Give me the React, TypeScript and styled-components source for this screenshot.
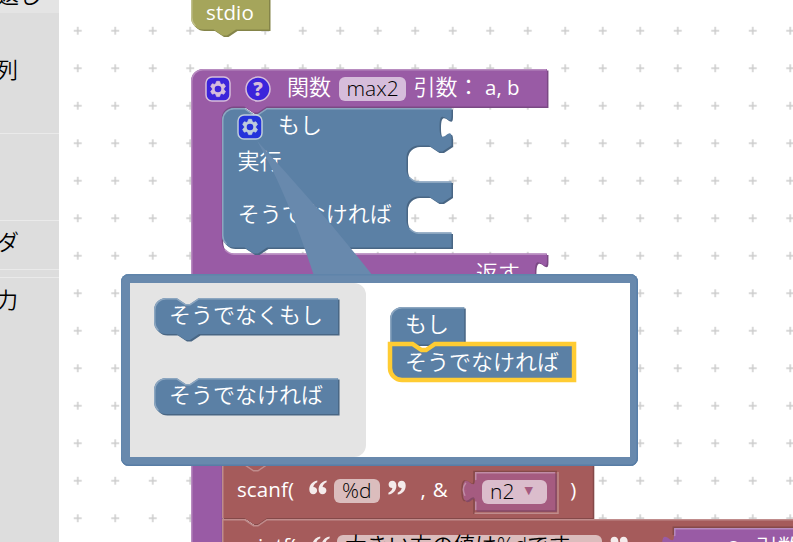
import React from 'react';
import styled, { createGlobalStyle } from 'styled-components';

const GlobalStyle = createGlobalStyle`
  * { box-sizing: border-box; }
  html, body, #root { margin: 0; height: 100%; }
  body { overflow: hidden; background: #fff; font: 350 22px "Noto Sans CJK JP", sans-serif; }
`;

const SIDEBAR = 59;
const SCALE = 1.5;

const Page = styled.div`
  display: flex;
  width: 793px;
  height: 542px;
  overflow: hidden;
`;

const Toolbox = styled.nav`
  flex: none;
  width: ${SIDEBAR}px;
  height: 542px;
  overflow: hidden;
  background: #ddd;
  display: flex;
  flex-direction: column;
`;

const Category = styled.div<{ $height: number; $active?: boolean; $line?: boolean; $end?: number; $bottom?: number }>`
  flex: none;
  height: ${p => p.$height}px;
  padding-right: ${p => SIDEBAR - (p.$end ?? 18)}px;
  padding-bottom: ${p => p.$bottom ?? 0}px;
  display: flex;
  align-items: flex-end;
  justify-content: flex-end;
  white-space: nowrap;
  line-height: 24px;
  color: #000;
  background: ${p => (p.$active ? '#e4e4e4' : 'transparent')};
  border-bottom: ${p => (p.$line ? '1px solid #eaeaea' : '0')};
`;

const Workspace = styled.main`
  position: relative;
  flex: 1;
  height: 542px;
  overflow: hidden;
  background: #fff;
`;

const Drawing = styled.svg`
  position: absolute;
  left: 0;
  top: 0;
  display: block;
  overflow: visible;
  pointer-events: none;
`;

const BlockNode = styled.div<{ $x: number; $y: number }>`
  position: absolute;
  left: ${p => p.$x}px;
  top: ${p => p.$y}px;
`;

const Fields = styled.div`
  position: relative;
  display: flex;
  flex-direction: column;
`;

const Row = styled.div<{ $height: number; $pad?: number }>`
  display: flex;
  align-items: center;
  height: ${p => p.$height}px;
  padding-left: ${p => p.$pad ?? 15}px;
  white-space: nowrap;
  color: #fff;
`;

const Label = styled.span<{ $gap?: number; $latin?: boolean; $drop?: number; $track?: number }>`
  flex: none;
  margin-left: ${p => p.$gap ?? 0}px;
  margin-top: ${p => p.$drop ?? (p.$latin ? 0 : -4)}px;
  font-family: ${p => (p.$latin ? '"Open Sans", sans-serif' : '"Noto Sans CJK JP", sans-serif')};
  font-size: ${p => (p.$latin ? 20.5 : 22)}px;
  font-weight: ${p => (p.$latin ? 400 : 350)};
  letter-spacing: ${p => p.$track ?? 0}px;
  line-height: 24px;
`;

const Pill = styled.span<{ $gap: number; $width: number; $latin?: boolean }>`
  flex: none;
  display: flex;
  align-items: center;
  width: ${p => p.$width}px;
  height: 24px;
  margin-left: ${p => p.$gap}px;
  padding-left: 8px;
  border-radius: 6px;
  background: rgba(255, 255, 255, 0.6);
  color: #000;
  font-family: ${p => (p.$latin ? '"Open Sans", sans-serif' : '"Open Sans", "Noto Sans CJK JP", sans-serif')};
  font-size: ${p => (p.$latin ? 21 : 21.7)}px;
  line-height: ${p => (p.$latin ? 22 : 20)}px;
  padding-bottom: ${p => (p.$latin ? 2 : 4)}px;
`;

const Arrow = styled.span`
  margin: 0 0 0 10px;
  color: #a55b80;
  font: 11px/12px "DejaVu Sans", sans-serif;
`;

const QuoteMark = styled.svg<{ $gap: number }>`
  flex: none;
  display: block;
  width: 18px;
  height: 15px;
  margin: -6px 0 0 ${p => p.$gap}px;
`;

const Icon = styled.svg<{ $gap?: number }>`
  flex: none;
  display: block;
  width: 24px;
  height: 24px;
  margin-left: ${p => p.$gap ?? 0}px;
  overflow: visible;
  opacity: 0.6;
`;

const Bubble = styled.section`
  position: absolute;
  left: ${121 - SIDEBAR}px;
  top: 273.5px;
  width: 517px;
  height: 192px;
  padding: 9.5px 8px 9px 9px;
  border-radius: 8px;
  background: #6889ad;
  box-shadow: inset 0 1.5px 0 #5f84aa, inset 0 -1.5px 0 #587da5, inset 1px 0 0 #6186ad, inset -1.5px 0 0 #587fa9;
`;

const MiniWorkspace = styled.div`
  position: relative;
  height: 100%;
  background: #fff;
`;

const Flyout = styled.div`
  width: 236px;
  height: 100%;
  border-radius: 0 12px 12px 0;
  background: #e4e4e4;
`;

type Palette = { fill: string; light: string; dark: string };
const PURPLE: Palette = { fill: '#995ba5', light: '#b88cc0', dark: '#7a4984' };
const BLUE: Palette = { fill: '#5b80a5', light: '#8ca6c0', dark: '#496684' };
const RED: Palette = { fill: '#a55b5b', light: '#c08c8c', dark: '#844949' };
const ROSE: Palette = { fill: '#a55b80', light: '#c08ca6', dark: '#844966' };
const OLIVE: Palette = { fill: '#a5a55b', light: '#c0c08c', dark: '#848449' };

const NOTCH = 'l 6,4 3,0 6,-4';
const NOTCH_BACK = 'l -6,4 -3,0 -6,-4';
const TAB_DOWN = 'v 5 c 0,10 -8,-8 -8,7.5 s 8,-2.5 8,7.5';
const SOCKET = `${NOTCH_BACK} h -7 a 8,8 0 0,0 -8,8`;

function Shape({ d, light, palette, outline }: { d: string; light?: string; palette: Palette; outline?: string }) {
  return (
    <Drawing width="1" height="1">
      <g transform={`scale(${SCALE})`}>
        <path d={d} fill={palette.dark} transform="translate(1,1)" />
        <path d={d} fill={palette.fill} />
        {light && <path d={light} fill="none" stroke={palette.light} strokeWidth="1" strokeLinecap="round" />}
        {outline && <path d={d} fill="none" stroke={outline} strokeWidth="3" />}
      </g>
    </Drawing>
  );
}

function Gear({ gap }: { gap?: number }) {
  return (
    <Icon viewBox="0 0 16 16" $gap={gap}>
      <rect width="16" height="16" rx="4" fill="#00f" stroke="#fff" />
      <path
        fill="#fff"
        stroke="#fff"
        strokeWidth="0.5"
        d="m4.203,7.296 0,1.368 -0.92,0.677 -0.11,0.41 0.9,1.559 0.41,0.11 1.043,-0.457 1.187,0.683 0.127,1.134 0.3,0.3 1.8,0 0.3,-0.299 0.127,-1.138 1.185,-0.682 1.046,0.458 0.409,-0.11 0.9,-1.559 -0.11,-0.41 -0.92,-0.677 0,-1.366 0.92,-0.677 0.11,-0.41 -0.9,-1.559 -0.409,-0.109 -1.046,0.458 -1.185,-0.682 -0.127,-1.138 -0.3,-0.299 -1.8,0 -0.3,0.3 -0.126,1.135 -1.187,0.682 -1.043,-0.457 -0.41,0.11 -0.899,1.559 0.108,0.409z"
      />
      <circle cx="8" cy="8" r="2.2" fill="#00f" />
    </Icon>
  );
}

function Help({ gap }: { gap?: number }) {
  return (
    <Icon viewBox="0 0 16 16" $gap={gap}>
      <circle cx="8" cy="8" r="8" fill="#00f" stroke="#fff" />
      <text x="8" y="12.4" textAnchor="middle" fontFamily="Open Sans" fontWeight="800" fontSize="12.5" fill="#fff">?</text>
    </Icon>
  );
}

const COMMA = 'M8.3,0.4 C3,1.5 0.3,5 0.3,9.6 C0.3,12.6 2,14.3 4.3,14.3 C6.6,14.3 8.1,12.6 8.1,10.6 C8.1,8.4 6.5,7 4.3,7 C4.6,5 6,3.2 8.3,2.3 Z';

function Quote({ gap, close }: { gap: number; close?: boolean }) {
  return (
    <QuoteMark viewBox="0 0 18 15" $gap={gap}>
      <g fill="#fff" opacity="0.88" transform={close ? 'rotate(180 9 7.5)' : undefined}>
        <path d={COMMA} />
        <path d={COMMA} transform="translate(9.3,0)" />
      </g>
    </QuoteMark>
  );
}

const at = (x: number, y: number) => ({ $x: x - SIDEBAR, $y: y });

export default function App() {
  return (
    <Page>
      <GlobalStyle />
      <Toolbox>
        <Category $height={13} $active $end={41} $bottom={8}>繰り返し</Category>
        <Category $height={121} $line $bottom={53}>配列</Category>
        <Category $height={87} $line />
        <Category $height={49} $line $bottom={17} $end={19}>ヘッダ</Category>
        <Category $height={8} $line />
        <Category $height={44} $bottom={12}>入出力</Category>
      </Toolbox>

      <Workspace>
        <Drawing width="734" height="542">
          <defs>
            <pattern id="grid" width="37.5" height="37.5" x="0" y="12" patternUnits="userSpaceOnUse">
              <path d="M14.75,18.75h8M18.75,14.75v8" stroke="#ccc" strokeWidth="1.5" />
            </pattern>
          </defs>
          <rect width="734" height="542" fill="url(#grid)" />
        </Drawing>

        <BlockNode {...at(191, -8)}>
          <Shape
            palette={OLIVE}
            d={`M0,0 H52 V25 H30 ${NOTCH_BACK} H8 a 8,8 0 0,1 -8,-8 z`}
            light="M0.5,0 V17 a 7.5,7.5 0 0,0 2.2,5.3"
          />
          <Fields>
            <Row $height={39}><Label $latin $track={0.15}>stdio</Label></Row>
          </Fields>
        </BlockNode>

        <BlockNode {...at(191, 69)}>
          <Shape
            palette={PURPLE}
            d={`M0,8 A8,8 0 0,1 8,0 H237.3 V25 H50.5 ${SOCKET} V115 a 8,8 0 0,0 8,8 H237.3 ${TAB_DOWN} V160 H0 z`}
            light="M0.5,160 V8 A7.5,7.5 0 0,1 8,0.5 H236.5 M22.9,120.7 a 8.5,8.5 0 0,0 5.6,2.8 H236.5"
          />
          <Fields>
            <Row $height={39}>
              <Gear />
              <Help gap={16} />
              <Label $gap={17} $drop={-8}>関数</Label>
              <Pill $gap={7.5} $width={67} $latin>max2</Pill>
              <Label $gap={8} $drop={-8}>引数：</Label>
              <Label $gap={5.5} $latin $drop={-4}>a, b</Label>
            </Row>
            <Row $height={146} />
            <Row $height={36} $pad={285}><Label $drop={-3}>返す</Label></Row>
          </Fields>
        </BlockNode>

        <BlockNode {...at(222, 108)}>
          <Shape
            palette={BLUE}
            d={`M0,8 A8,8 0 0,1 8,0 H15 ${NOTCH} H153 ${TAB_DOWN} V25 H153 ${SOCKET} v 8 a 8,8 0 0,0 8,8 H153 V59 H153 ${SOCKET} v 8 a 8,8 0 0,0 8,8 H153 V93 H30 ${NOTCH_BACK} H8 a 8,8 0 0,1 -8,-8 z`}
            light="M2.7,90.3 A7.5,7.5 0 0,1 0.5,85 V8 A7.5,7.5 0 0,1 8,0.5 H15 l 6,4 3,0 6,-4 H152.5 M125.4,46.7 a 8.5,8.5 0 0,0 5.6,2.8 H152.5 M125.4,80.7 a 8.5,8.5 0 0,0 5.6,2.8 H152.5"
          />
          <Fields>
            <Row $height={38} $pad={15.5}><Gear /><Label $gap={16.5} $drop={-9}>もし</Label></Row>
            <Row $height={33} $pad={15.5}><Label $drop={-7}>実行</Label></Row>
            <Row $height={71} $pad={15.7}><Label $drop={-5}>そうでなければ</Label></Row>
          </Fields>
        </BlockNode>

        <BlockNode {...at(191, 400)}>
          <Shape palette={PURPLE} d="M0,0 H20.5 V110 H0 z" light="M0.5,0 V110" />
        </BlockNode>

        <BlockNode {...at(222, 430)}>
          <Shape palette={RED} d={`M0,0 H247.2 V23 H30 ${NOTCH_BACK} H0 z`} />
        </BlockNode>

        <BlockNode {...at(222, 464)}>
          <Shape
            palette={RED}
            d={`M0,0 H15 ${NOTCH} H247.2 V36 H30 ${NOTCH_BACK} H0 z`}
            light="M0.5,36 V0.5 H15 l 6,4 3,0 6,-4 H246"
          />
          <Drawing width="1" height="1">
            <path d="M252,50 V7.5 H335 M252,15.5 c0,15 -12,-12 -12,11.25 s12,-3.75 12,11.25" fill="none" stroke={RED.dark} strokeWidth="1.5" />
            <path d="M252.5,49.2 H336 V8" fill="none" stroke={RED.light} strokeWidth="1.5" />
          </Drawing>
          <Fields>
            <Row $height={53}>
              <Label $latin $drop={-3} $track={0.1}>scanf(</Label>
              <Quote gap={15} />
              <Pill $gap={7} $width={46} $latin>%d</Pill>
              <Quote gap={7.5} close />
              <Label $latin $gap={15} $drop={-3} $track={0.7}>, &amp;</Label>
              <Label $latin $gap={122} $drop={-3}>)</Label>
            </Row>
          </Fields>
        </BlockNode>

        <BlockNode {...at(475, 472)}>
          <Shape
            palette={ROSE}
            d="M0,0 H53.5 V25.5 H0 V20 c 0,-10 -8,8 -8,-7.5 s 8,2.5 8,-7.5 z"
            light="M0.5,25 V20 M-6.8,15.5 c-1.5,-3 -1,-6 .5,-8 M0.5,5 V0.5 H53"
          />
          <Fields>
            <Row $height={40} $pad={7}>
              <Pill $gap={0} $width={65} $latin>n2<Arrow>▼</Arrow></Pill>
            </Row>
          </Fields>
        </BlockNode>

        <BlockNode {...at(222, 518.5)}>
          <Shape
            palette={RED}
            d={`M0,0 H15 ${NOTCH} H400 V40 H0 z`}
            light="M0.5,40 V0.5 H15 l 6,4 3,0 6,-4 H400"
          />
          <Fields>
            <Row $height={56}>
              <Label $latin $drop={-3}>printf(</Label>
              <Quote gap={16} />
              <Pill $gap={7} $width={265.5}>大きい方の値は%dです。</Pill>
              <Quote gap={8} close />
            </Row>
          </Fields>
        </BlockNode>

        <BlockNode {...at(674, 528)}>
          <Shape
            palette={PURPLE}
            d="M0,0 H120 V30 H0 V20 c 0,-10 -8,8 -8,-7.5 s 8,2.5 8,-7.5 z"
            light="M0.5,5 V0.5 H120"
          />
          <Drawing width="1" height="1">
            <path d="M-0.7,7 V-0.7 H140" fill="none" stroke={RED.dark} strokeWidth="1.5" />
          </Drawing>
          <Fields>
            <Row $height={37} $pad={13}>
              <Label $latin>max2</Label><Label $gap={16}>引数：</Label>
            </Row>
          </Fields>
        </BlockNode>

        <Drawing width="734" height="542">
          <path d="M198.2,141 Q228,193 255,276 H314 Q262,210 198.2,141 z" fill="#6889ad" />
        </Drawing>

        <Bubble>
          <MiniWorkspace>
            <Flyout />
            <BlockNode $x={24} $y={14.5}>
              <Shape
                palette={BLUE}
                d={`M0,8 A8,8 0 0,1 8,0 H15 ${NOTCH} H122.7 V24 H30 ${NOTCH_BACK} H8 a 8,8 0 0,1 -8,-8 z`}
                light="M2.7,21.3 A7.5,7.5 0 0,1 0.5,16 V8 A7.5,7.5 0 0,1 8,0.5 H15 l 6,4 3,0 6,-4 H122.2"
              />
              <Fields><Row $height={35}><Label>そうでなくもし</Label></Row></Fields>
            </BlockNode>
            <BlockNode $x={24} $y={94.5}>
              <Shape
                palette={BLUE}
                d={`M0,8 A8,8 0 0,1 8,0 H15 ${NOTCH} H122.7 V24 H8 a 8,8 0 0,1 -8,-8 z`}
                light="M2.7,21.3 A7.5,7.5 0 0,1 0.5,16 V8 A7.5,7.5 0 0,1 8,0.5 H15 l 6,4 3,0 6,-4 H122.2"
              />
              <Fields><Row $height={35}><Label>そうでなければ</Label></Row></Fields>
            </BlockNode>
            <BlockNode $x={260} $y={23.5}>
              <Shape
                palette={BLUE}
                d="M0,8 A8,8 0 0,1 8,0 H49.5 V25 H0 z"
                light="M0.5,24 V8 A7.5,7.5 0 0,1 8,0.5 H49"
              />
              <Fields><Row $height={35}><Label>もし</Label></Row></Fields>
            </BlockNode>
            <BlockNode $x={260} $y={61}>
              <Shape
                palette={BLUE}
                outline="#fc3"
                d={`M0,0 H15 ${NOTCH} H122.7 V24 H8 a 8,8 0 0,1 -8,-8 z`}
              />
              <Fields><Row $height={36}><Label>そうでなければ</Label></Row></Fields>
            </BlockNode>
          </MiniWorkspace>
        </Bubble>
      </Workspace>
    </Page>
  );
}
